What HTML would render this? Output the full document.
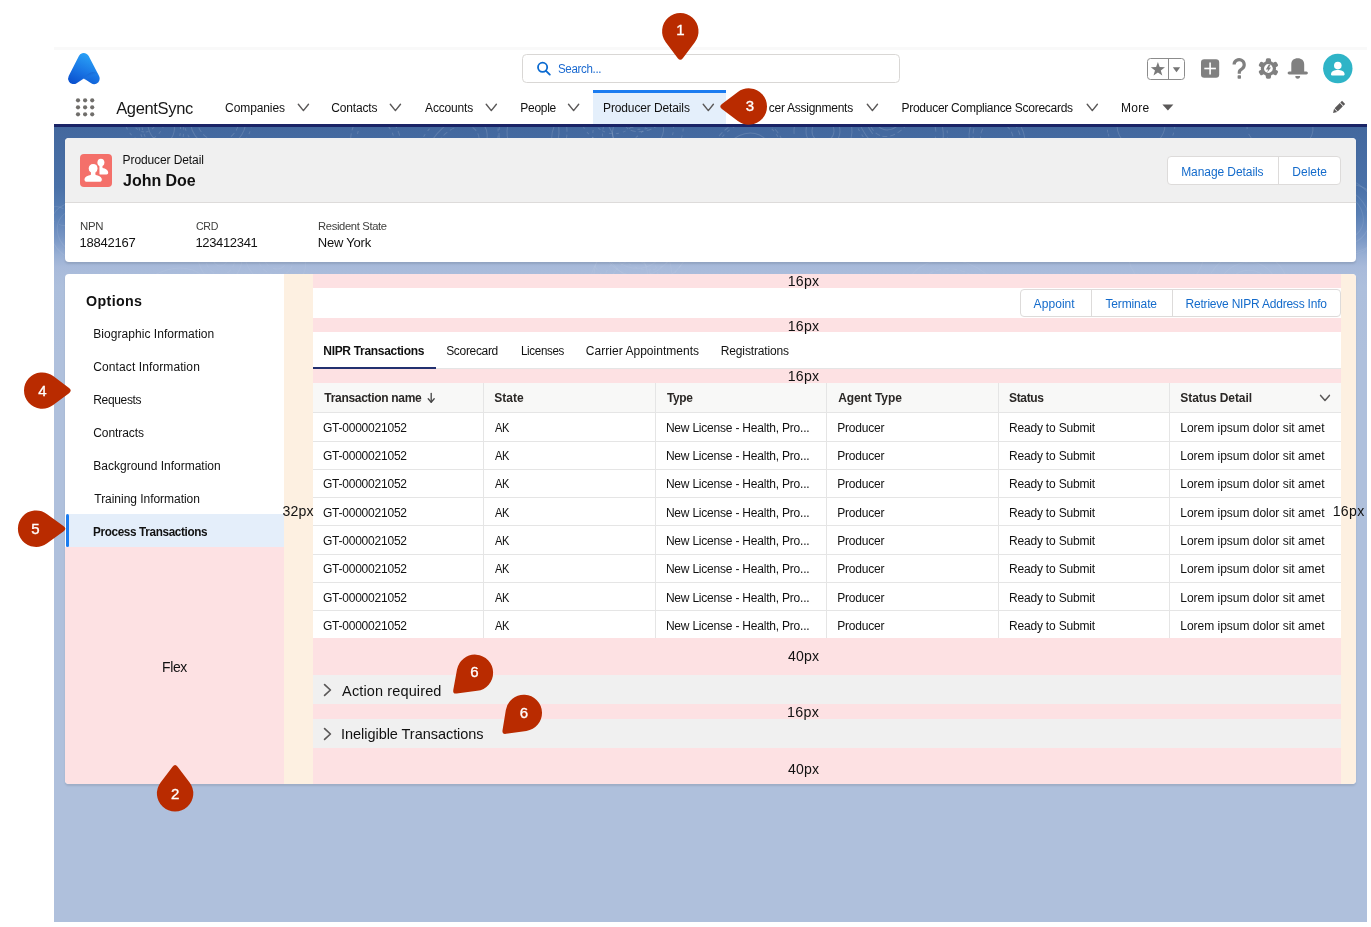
<!DOCTYPE html>
<html><head><meta charset="utf-8">
<style>
html,body{margin:0;padding:0;background:#fff;width:1371px;height:927px;overflow:hidden;position:relative;font-family:"Liberation Sans",sans-serif;}
.a{position:absolute;box-sizing:border-box;}
.t{position:absolute;white-space:pre;font-family:"Liberation Sans",sans-serif;transform-origin:0 0;}
#bg{left:54px;top:127px;width:1313px;height:795px;background:linear-gradient(180deg,#43689e 0px,#4a71a8 60px,#5a80b5 88px,#7795c4 110px,#98afd4 128px,#a8bada 140px,#adbfdc 160px,#afc0dc 230px,#afc0dc 795px);}
.card{background:#fff;border-radius:4px;box-shadow:0 2px 2px rgba(0,0,0,0.10);}
.pink{background:#fde1e3;}
.beige{background:#fdf0e1;}
.gray{background:#f0f0f0;}
.vline{width:1px;background:#e5e5e5;}
.hline{height:1px;background:#e5e5e5;}
</style></head><body>
<!-- page -->
<div class="a" style="left:54px;top:47px;width:1313px;height:3px;background:#f9f9f9"></div>
<div class="a" style="left:54px;top:50px;width:1313px;height:74px;background:#fff"></div>
<div class="a" id="bg"></div>
<svg class="a" style="left:54px;top:127px" width="1313" height="200" viewBox="54 127 1313 200">
  <defs><linearGradient id="fade" x1="0" y1="0" x2="0" y2="1"><stop offset="0" stop-color="#fff" stop-opacity="1"/><stop offset="0.55" stop-color="#fff" stop-opacity="0.6"/><stop offset="1" stop-color="#fff" stop-opacity="0"/></linearGradient>
  <mask id="fm"><rect x="54" y="127" width="1313" height="200" fill="url(#fade)"/></mask></defs>
  <g fill="none" stroke="#fff" stroke-opacity="0.14" stroke-width="1" mask="url(#fm)">
<ellipse cx="646" cy="223" rx="38" ry="30" transform="rotate(84 646 223)" stroke-dasharray="3 4"/>
<ellipse cx="646" cy="223" rx="47" ry="37" transform="rotate(84 646 223)" stroke-dasharray="3 4"/>
<ellipse cx="646" cy="223" rx="59" ry="48" transform="rotate(84 646 223)"/>
<ellipse cx="638" cy="131" rx="26" ry="22" transform="rotate(160 638 131)"/>
<ellipse cx="638" cy="131" rx="36" ry="31" transform="rotate(160 638 131)" stroke-dasharray="3 4"/>
<ellipse cx="638" cy="131" rx="46" ry="39" transform="rotate(160 638 131)" stroke-dasharray="3 4"/>
<ellipse cx="60" cy="216" rx="12" ry="8" transform="rotate(34 60 216)" stroke-dasharray="12 5"/>
<ellipse cx="630" cy="285" rx="26" ry="20" transform="rotate(115 630 285)" stroke-dasharray="12 5"/>
<ellipse cx="630" cy="285" rx="34" ry="27" transform="rotate(115 630 285)" stroke-dasharray="3 4"/>
<ellipse cx="630" cy="285" rx="50" ry="40" transform="rotate(115 630 285)"/>
<ellipse cx="988" cy="169" rx="17" ry="11" transform="rotate(52 988 169)" stroke-dasharray="12 5"/>
<ellipse cx="558" cy="311" rx="35" ry="24" transform="rotate(0 558 311)"/>
<ellipse cx="603" cy="225" rx="16" ry="12" transform="rotate(121 603 225)"/>
<ellipse cx="603" cy="225" rx="27" ry="19" transform="rotate(121 603 225)"/>
<ellipse cx="220" cy="256" rx="10" ry="8" transform="rotate(84 220 256)"/>
<ellipse cx="220" cy="256" rx="19" ry="15" transform="rotate(84 220 256)" stroke-dasharray="5 3"/>
<ellipse cx="220" cy="256" rx="27" ry="22" transform="rotate(84 220 256)"/>
<ellipse cx="196" cy="193" rx="16" ry="16" transform="rotate(49 196 193)"/>
<ellipse cx="196" cy="193" rx="24" ry="23" transform="rotate(49 196 193)"/>
<ellipse cx="196" cy="193" rx="40" ry="40" transform="rotate(49 196 193)" stroke-dasharray="3 4"/>
<ellipse cx="900" cy="122" rx="40" ry="28" transform="rotate(38 900 122)" stroke-dasharray="12 5"/>
<ellipse cx="900" cy="122" rx="48" ry="34" transform="rotate(38 900 122)"/>
<ellipse cx="900" cy="122" rx="53" ry="37" transform="rotate(38 900 122)" stroke-dasharray="3 4"/>
<ellipse cx="893" cy="103" rx="21" ry="14" transform="rotate(112 893 103)" stroke-dasharray="3 4"/>
<ellipse cx="893" cy="103" rx="28" ry="18" transform="rotate(112 893 103)"/>
<ellipse cx="893" cy="103" rx="35" ry="23" transform="rotate(112 893 103)" stroke-dasharray="5 3"/>
<ellipse cx="456" cy="150" rx="28" ry="19" transform="rotate(131 456 150)" stroke-dasharray="5 3"/>
<ellipse cx="456" cy="150" rx="38" ry="25" transform="rotate(131 456 150)"/>
<ellipse cx="456" cy="150" rx="51" ry="34" transform="rotate(131 456 150)" stroke-dasharray="3 4"/>
<ellipse cx="145" cy="110" rx="13" ry="9" transform="rotate(92 145 110)" stroke-dasharray="12 5"/>
<ellipse cx="145" cy="110" rx="22" ry="15" transform="rotate(92 145 110)" stroke-dasharray="3 4"/>
<ellipse cx="145" cy="110" rx="31" ry="22" transform="rotate(92 145 110)" stroke-dasharray="3 4"/>
<ellipse cx="275" cy="258" rx="12" ry="10" transform="rotate(41 275 258)" stroke-dasharray="12 5"/>
<ellipse cx="275" cy="258" rx="19" ry="16" transform="rotate(41 275 258)" stroke-dasharray="5 3"/>
<ellipse cx="275" cy="258" rx="33" ry="27" transform="rotate(41 275 258)"/>
<ellipse cx="401" cy="198" rx="12" ry="9" transform="rotate(32 401 198)"/>
<ellipse cx="401" cy="198" rx="20" ry="15" transform="rotate(32 401 198)"/>
<ellipse cx="401" cy="198" rx="36" ry="27" transform="rotate(32 401 198)" stroke-dasharray="3 4"/>
<ellipse cx="823" cy="131" rx="11" ry="11" transform="rotate(3 823 131)"/>
<ellipse cx="823" cy="131" rx="17" ry="17" transform="rotate(3 823 131)"/>
<ellipse cx="823" cy="131" rx="29" ry="28" transform="rotate(3 823 131)" stroke-dasharray="12 5"/>
<ellipse cx="467" cy="320" rx="12" ry="11" transform="rotate(98 467 320)" stroke-dasharray="5 3"/>
<ellipse cx="467" cy="320" rx="23" ry="21" transform="rotate(98 467 320)" stroke-dasharray="12 5"/>
<ellipse cx="467" cy="320" rx="28" ry="25" transform="rotate(98 467 320)"/>
<ellipse cx="1247" cy="292" rx="23" ry="21" transform="rotate(142 1247 292)"/>
<ellipse cx="1247" cy="292" rx="31" ry="29" transform="rotate(142 1247 292)"/>
<ellipse cx="1247" cy="292" rx="42" ry="40" transform="rotate(142 1247 292)"/>
<ellipse cx="161" cy="125" rx="18" ry="13" transform="rotate(75 161 125)"/>
<ellipse cx="161" cy="125" rx="26" ry="19" transform="rotate(75 161 125)" stroke-dasharray="3 4"/>
<ellipse cx="161" cy="125" rx="31" ry="22" transform="rotate(75 161 125)" stroke-dasharray="3 4"/>
<ellipse cx="80" cy="232" rx="24" ry="21" transform="rotate(41 80 232)"/>
<ellipse cx="80" cy="232" rx="32" ry="28" transform="rotate(41 80 232)"/>
<ellipse cx="533" cy="132" rx="28" ry="26" transform="rotate(93 533 132)"/>
<ellipse cx="533" cy="132" rx="37" ry="34" transform="rotate(93 533 132)" stroke-dasharray="5 3"/>
<ellipse cx="478" cy="246" rx="16" ry="15" transform="rotate(78 478 246)"/>
<ellipse cx="334" cy="303" rx="16" ry="12" transform="rotate(24 334 303)" stroke-dasharray="12 5"/>
<ellipse cx="1141" cy="125" rx="24" ry="23" transform="rotate(167 1141 125)"/>
<ellipse cx="1141" cy="125" rx="34" ry="32" transform="rotate(167 1141 125)" stroke-dasharray="3 4"/>
<ellipse cx="646" cy="116" rx="11" ry="7" transform="rotate(157 646 116)" stroke-dasharray="12 5"/>
<ellipse cx="646" cy="116" rx="19" ry="12" transform="rotate(157 646 116)" stroke-dasharray="3 4"/>
<ellipse cx="646" cy="116" rx="23" ry="14" transform="rotate(157 646 116)" stroke-dasharray="5 3"/>
<ellipse cx="583" cy="142" rx="33" ry="30" transform="rotate(48 583 142)"/>
<ellipse cx="638" cy="239" rx="30" ry="29" transform="rotate(145 638 239)"/>
<ellipse cx="638" cy="239" rx="37" ry="37" transform="rotate(145 638 239)"/>
<ellipse cx="638" cy="239" rx="51" ry="50" transform="rotate(145 638 239)" stroke-dasharray="3 4"/>
<ellipse cx="997" cy="139" rx="18" ry="16" transform="rotate(62 997 139)" stroke-dasharray="5 3"/>
<ellipse cx="997" cy="139" rx="27" ry="23" transform="rotate(62 997 139)" stroke-dasharray="5 3"/>
<ellipse cx="997" cy="139" rx="31" ry="27" transform="rotate(62 997 139)"/>
<ellipse cx="214" cy="200" rx="29" ry="22" transform="rotate(164 214 200)" stroke-dasharray="3 4"/>
<ellipse cx="214" cy="200" rx="40" ry="30" transform="rotate(164 214 200)" stroke-dasharray="12 5"/>
<ellipse cx="214" cy="200" rx="46" ry="35" transform="rotate(164 214 200)" stroke-dasharray="5 3"/>
<ellipse cx="173" cy="291" rx="34" ry="22" transform="rotate(166 173 291)"/>
<ellipse cx="1350" cy="218" rx="34" ry="33" transform="rotate(58 1350 218)"/>
<ellipse cx="90" cy="175" rx="23" ry="22" transform="rotate(50 90 175)"/>
<ellipse cx="615" cy="108" rx="26" ry="25" transform="rotate(124 615 108)" stroke-dasharray="3 4"/>
<ellipse cx="615" cy="108" rx="37" ry="36" transform="rotate(124 615 108)" stroke-dasharray="3 4"/>
<ellipse cx="1166" cy="252" rx="38" ry="38" transform="rotate(89 1166 252)"/>
<ellipse cx="746" cy="164" rx="32" ry="26" transform="rotate(115 746 164)"/>
<ellipse cx="746" cy="164" rx="44" ry="35" transform="rotate(115 746 164)" stroke-dasharray="3 4"/>
<ellipse cx="746" cy="164" rx="46" ry="38" transform="rotate(115 746 164)" stroke-dasharray="5 3"/>
<ellipse cx="1338" cy="215" rx="27" ry="22" transform="rotate(36 1338 215)"/>
<ellipse cx="1338" cy="215" rx="33" ry="27" transform="rotate(36 1338 215)"/>
<ellipse cx="1338" cy="215" rx="45" ry="37" transform="rotate(36 1338 215)"/>
<ellipse cx="769" cy="318" rx="14" ry="9" transform="rotate(17 769 318)"/>
<ellipse cx="769" cy="318" rx="21" ry="14" transform="rotate(17 769 318)"/>
<ellipse cx="769" cy="318" rx="32" ry="21" transform="rotate(17 769 318)" stroke-dasharray="12 5"/>
<ellipse cx="621" cy="279" rx="37" ry="27" transform="rotate(86 621 279)"/>
<ellipse cx="1280" cy="128" rx="33" ry="23" transform="rotate(4 1280 128)" stroke-dasharray="12 5"/>
<ellipse cx="472" cy="178" rx="29" ry="26" transform="rotate(19 472 178)" stroke-dasharray="3 4"/>
<ellipse cx="376" cy="144" rx="26" ry="19" transform="rotate(79 376 144)" stroke-dasharray="3 4"/>
<ellipse cx="376" cy="144" rx="33" ry="25" transform="rotate(79 376 144)" stroke-dasharray="5 3"/>
<ellipse cx="1198" cy="217" rx="17" ry="14" transform="rotate(39 1198 217)" stroke-dasharray="5 3"/>
<ellipse cx="1198" cy="217" rx="28" ry="23" transform="rotate(39 1198 217)" stroke-dasharray="12 5"/>
<ellipse cx="1198" cy="217" rx="39" ry="32" transform="rotate(39 1198 217)" stroke-dasharray="12 5"/>
<ellipse cx="848" cy="296" rx="16" ry="11" transform="rotate(140 848 296)" stroke-dasharray="5 3"/>
<ellipse cx="218" cy="119" rx="22" ry="21" transform="rotate(78 218 119)" stroke-dasharray="5 3"/>
<ellipse cx="218" cy="119" rx="29" ry="28" transform="rotate(78 218 119)"/>
<ellipse cx="218" cy="119" rx="35" ry="34" transform="rotate(78 218 119)" stroke-dasharray="3 4"/>
<ellipse cx="954" cy="301" rx="39" ry="31" transform="rotate(21 954 301)" stroke-dasharray="5 3"/>
<ellipse cx="954" cy="301" rx="50" ry="40" transform="rotate(21 954 301)"/>
  </g>
</svg>
<div class="a" style="left:54px;top:124px;width:1313px;height:3px;background:#1a2466"></div>

<!-- active nav tab -->
<div class="a" style="left:593px;top:93px;width:133px;height:31px;background:#e4effb"></div>
<div class="a" style="left:593px;top:90px;width:133px;height:3px;background:#1b7cf0"></div>
<!-- logo -->
<svg class="a" style="left:0;top:0" width="1371" height="927" viewBox="0 0 1371 927">
  <defs>
    <linearGradient id="lg" gradientUnits="userSpaceOnUse" x1="90" y1="53" x2="76" y2="84">
      <stop offset="0" stop-color="#2ba6f8"/><stop offset="0.55" stop-color="#1a78e6"/><stop offset="1" stop-color="#0b52cf"/>
    </linearGradient>
    <linearGradient id="lg2" gradientUnits="userSpaceOnUse" x1="90" y1="70" x2="93" y2="78">
      <stop offset="0" stop-color="#0a47b8" stop-opacity="0.85"/><stop offset="1" stop-color="#2a8cf0" stop-opacity="0"/>
    </linearGradient>
  </defs>
  <polygon points="83.8,58.6 94.2,78.6 83.8,71.8 73.6,78.6" fill="url(#lg)" stroke="url(#lg)" stroke-width="11" stroke-linejoin="round"/>
  <path d="M82.5,78.3 C86,75.5 89.5,72.5 93,72 C95.5,71.8 97.5,73 98.5,74.5 L99.5,78 C97,76 94,75.5 91,77 C88.5,78.2 86.5,80 85.5,80.5 Z" fill="url(#lg2)"/>
  <!-- grid -->
  <g fill="#706e6b">
    <circle cx="78" cy="100.3" r="2.1"/><circle cx="85.1" cy="100.3" r="2.1"/><circle cx="92.2" cy="100.3" r="2.1"/>
    <circle cx="78" cy="107.3" r="2.1"/><circle cx="85.1" cy="107.3" r="2.1"/><circle cx="92.2" cy="107.3" r="2.1"/>
    <circle cx="78" cy="114.3" r="2.1"/><circle cx="85.1" cy="114.3" r="2.1"/><circle cx="92.2" cy="114.3" r="2.1"/>
  </g>
  <!-- search box -->
  <rect x="522.5" y="54.5" width="377" height="28" rx="4" fill="#fff" stroke="#d9d7d5" stroke-width="1"/>
  <circle cx="542.6" cy="67.3" r="4.6" fill="none" stroke="#0b6ad0" stroke-width="1.8"/>
  <line x1="546" y1="70.8" x2="549.8" y2="74.6" stroke="#0b6ad0" stroke-width="1.9" stroke-linecap="round"/>
  <!-- favorites -->
  <rect x="1147.5" y="58.5" width="37" height="21" rx="3" fill="#fff" stroke="#8c8c8c" stroke-width="1"/>
  <line x1="1168.5" y1="58.5" x2="1168.5" y2="79.5" stroke="#8c8c8c" stroke-width="1"/>
  <polygon points="1157.9,62 1159.7,67.1 1165,67.2 1160.8,70.5 1162.3,75.6 1157.9,72.6 1153.5,75.6 1155,70.5 1150.8,67.2 1156.1,67.1" fill="#7a7a7a"/>
  <polygon points="1172.8,67.2 1180.2,67.2 1176.5,72.2" fill="#747474"/>
  <!-- plus -->
  <rect x="1201" y="59.2" width="18.2" height="18.6" rx="3.2" fill="#808080"/>
  <line x1="1204.3" y1="68.5" x2="1215.9" y2="68.5" stroke="#fff" stroke-width="1.6"/>
  <line x1="1210.1" y1="62.6" x2="1210.1" y2="74.4" stroke="#fff" stroke-width="1.6"/>
  <!-- help -->
  <path d="M1234.1,64.6 A5.05,5.05 0 1 1 1242.3,68.6 C1240.2,69.8 1239.3,70.6 1239.3,72.2 L1239.3,73.8" fill="none" stroke="#808080" stroke-width="3.2" stroke-linecap="butt"/>
  <rect x="1237.6" y="75.2" width="3.4" height="3.6" rx="0.7" fill="#808080"/>
  <!-- gear -->
  <g transform="translate(1268.4,68.5)">
    <g fill="#808080">
      <rect x="-2.6" y="-10.2" width="5.2" height="20.4" rx="1.6"/>
      <rect x="-2.6" y="-10.2" width="5.2" height="20.4" rx="1.6" transform="rotate(60)"/>
      <rect x="-2.6" y="-10.2" width="5.2" height="20.4" rx="1.6" transform="rotate(120)"/>
      <circle r="7.6"/>
    </g>
    <circle r="4.4" fill="#fff"/>
    <polygon points="0.4,-3.9 2.3,-3.9 0.7,-0.9 2.7,-0.9 -1.3,4.1 -0.2,0.9 -2.5,0.9" fill="#808080"/>
  </g>
  <!-- bell -->
  <path d="M1291.3,71.6 L1291.3,64.5 C1291.3,60.4 1293.8,58.3 1297.7,58.3 C1301.6,58.3 1304.2,60.4 1304.2,64.5 L1304.2,71.6 L1306.4,71.6 Q1307.9,71.8 1307.9,73.1 Q1307.9,74.4 1306.4,74.4 L1289.1,74.4 Q1287.6,74.4 1287.6,73.1 Q1287.6,71.8 1289.1,71.6 Z" fill="#808080"/>
  <path d="M1295.3,76 L1300.1,76 Q1300.1,78.7 1297.7,78.7 Q1295.3,78.7 1295.3,76 Z" fill="#808080"/>
  <!-- avatar -->
  <circle cx="1337.8" cy="68.5" r="14.7" fill="#2fb4c7"/>
  <circle cx="1337.8" cy="65.6" r="3.8" fill="#fff"/>
  <path d="M1331,74.2 C1331,71.2 1334.5,69.9 1337.8,69.9 C1341.1,69.9 1344.6,71.2 1344.6,74.2 L1344.6,74.6 Q1344.6,75.4 1343.8,75.4 L1331.8,75.4 Q1331,75.4 1331,74.6 Z" fill="#fff"/>
  <!-- nav chevrons -->
  <g fill="none" stroke="#5a5858" stroke-width="1.4" stroke-linecap="round" stroke-linejoin="round">
    <polyline points="298.3,104.2 303.4,110.6 308.5,104.2"/>
    <polyline points="390.3,104.2 395.4,110.6 400.5,104.2"/>
    <polyline points="486.2,104.2 491.3,110.6 496.4,104.2"/>
    <polyline points="568.5,104.2 573.6,110.6 578.7,104.2"/>
    <polyline points="703.2,104.2 708.3,110.6 713.4,104.2"/>
    <polyline points="867.3,104.2 872.4,110.6 877.5,104.2"/>
    <polyline points="1087.2,104.2 1092.3,110.6 1097.4,104.2"/>
  </g>
  <polygon points="1162.4,104.4 1173.4,104.4 1167.9,110.6" fill="#5a5858"/>
  <!-- pencil -->
  <g transform="translate(1339,107) rotate(45)">
    <rect x="-2.2" y="-6.5" width="4.4" height="2.4" fill="#5a5858"/>
    <rect x="-2.2" y="-3.3" width="4.4" height="7.3" fill="#5a5858"/>
    <polygon points="-2.2,4.8 2.2,4.8 0,8.4" fill="#5a5858"/>
  </g>
</svg>


<!-- header card -->
<div class="a card" style="left:65px;top:138px;width:1291px;height:124px;overflow:hidden">
  <div class="a" style="left:0;top:0;width:1291px;height:65px;background:#f0f0f0;border-bottom:1px solid #dddbda"></div>
</div>
<div class="a" style="left:79.5px;top:154.2px;width:32.6px;height:32.8px;border-radius:4px;background:#f4706a"></div>
<svg class="a" style="left:79.5px;top:154.2px" width="33" height="33" viewBox="0 0 33 33">
  <g fill="#fff">
    <ellipse cx="20.9" cy="8.6" rx="3.5" ry="3.8"/>
    <path d="M19.4,11.5 L22.4,11.5 L22.6,14 C25.5,14.6 28.2,16 28.2,18.6 C28.2,20 27.6,20.5 26.6,20.5 L19.5,20.5 Z"/>
  </g>
  <g fill="#fff" stroke="#f4706a" stroke-width="1.1">
    <path d="M13.1,9.4 C16,9.4 18.1,11.6 18.1,14.4 C18.1,16.4 17.1,17.8 15.9,18.8 L16,20.4 C19.6,21.1 22.4,22.6 22.4,25.6 C22.4,27.3 21.6,28.4 20.2,28.4 L6.2,28.4 C4.7,28.4 3.9,27.4 3.9,25.6 C3.9,22.6 6.7,21.1 10.3,20.4 L10.4,18.8 C9.1,17.8 8.1,16.4 8.1,14.4 C8.1,11.6 10.2,9.4 13.1,9.4 Z"/>
  </g>
</svg>
<!-- header buttons -->
<div class="a" style="left:1167px;top:156px;width:174px;height:29px;background:#fff;border:1px solid #dddbda;border-radius:4px"></div>
<div class="a" style="left:1278px;top:156px;width:1px;height:29px;background:#dddbda"></div>

<!-- main card -->
<div class="a card" style="left:65px;top:274px;width:1291px;height:510px;overflow:hidden">
</div>
<!-- sidebar -->
<div class="a" style="left:66px;top:514px;width:218px;height:33px;background:#e4eefa"></div>
<div class="a" style="left:65.8px;top:514.2px;width:3.2px;height:33px;background:#1b7cf0;border-radius:1.5px"></div>
<div class="a pink" style="left:65px;top:547px;width:219px;height:237px;border-bottom-left-radius:4px"></div>
<div class="a beige" style="left:284px;top:274px;width:29px;height:510px"></div>
<div class="a beige" style="left:1341px;top:274px;width:15px;height:510px;border-top-right-radius:4px;border-bottom-right-radius:4px"></div>
<!-- content column -->
<div class="a pink" style="left:313px;top:274px;width:1028px;height:14px"></div>
<div class="a pink" style="left:313px;top:318px;width:1028px;height:14px"></div>
<div class="a hline" style="left:313px;top:368px;width:1028px"></div>
<div class="a" style="left:313px;top:367px;width:123px;height:2px;background:#22306f"></div>
<div class="a pink" style="left:313px;top:369px;width:1028px;height:14px"></div>
<div class="a" style="left:313px;top:383px;width:1028px;height:29px;background:#f8f8f7"></div>
<div class="a" style="left:1019.5px;top:288.5px;width:321.5px;height:28.5px;background:#fff;border:1px solid #dddbda;border-radius:4px"></div>
<div class="a" style="left:1091px;top:288.5px;width:1px;height:28.5px;background:#dddbda"></div>
<div class="a" style="left:1172px;top:288.5px;width:1px;height:28.5px;background:#dddbda"></div>
<div class="a" style="left:313px;top:412px;width:1028px;height:226px;background:#fff"></div>
<div class="a hline" style="left:313px;top:412px;width:1028px"></div>
<div class="a hline" style="left:313px;top:441px;width:1028px"></div>
<div class="a hline" style="left:313px;top:469px;width:1028px"></div>
<div class="a hline" style="left:313px;top:497px;width:1028px"></div>
<div class="a hline" style="left:313px;top:525px;width:1028px"></div>
<div class="a hline" style="left:313px;top:554px;width:1028px"></div>
<div class="a hline" style="left:313px;top:582px;width:1028px"></div>
<div class="a hline" style="left:313px;top:610px;width:1028px"></div>
<div class="a vline" style="left:483px;top:383px;height:255px"></div>
<div class="a vline" style="left:655px;top:383px;height:255px"></div>
<div class="a vline" style="left:826px;top:383px;height:255px"></div>
<div class="a vline" style="left:998px;top:383px;height:255px"></div>
<div class="a vline" style="left:1169px;top:383px;height:255px"></div>
<div class="a pink" style="left:313px;top:638px;width:1028px;height:37px"></div>
<div class="a gray" style="left:313px;top:675px;width:1028px;height:29px"></div>
<div class="a pink" style="left:313px;top:704px;width:1028px;height:15px"></div>
<div class="a gray" style="left:313px;top:719px;width:1028px;height:29px"></div>
<div class="a pink" style="left:313px;top:748px;width:1028px;height:36px"></div>
<svg class="a" style="left:0;top:0" width="1371" height="927" viewBox="0 0 1371 927">
  <g fill="none" stroke="#5a5858" stroke-width="1.5" stroke-linecap="round" stroke-linejoin="round">
    <polyline points="1320.6,395.4 1325,400.4 1329.4,395.4"/>
    </g><g fill="none" stroke="#5a5858" stroke-width="1.7" stroke-linecap="round" stroke-linejoin="round"><polyline points="324.6,684.6 330.4,690 324.6,695.4"/>
    <polyline points="324.6,728.6 330.4,734 324.6,739.4"/>
  </g>
  <g fill="none" stroke="#444" stroke-width="1.3" stroke-linecap="round" stroke-linejoin="round">
    <line x1="431.2" y1="393.5" x2="431.2" y2="402"/>
    <polyline points="428.2,398.8 431.2,402.2 434.2,398.8"/>
  </g>
</svg>
<span class=t style="left:116.2px;top:100.33px;font-size:16.5px;line-height:16.5px;font-weight:400;color:#181818;letter-spacing:-0.338px">AgentSync</span>
<span class=t style="left:225.1px;top:101.84px;font-size:12px;line-height:12px;font-weight:400;color:#111111;letter-spacing:-0.100px">Companies</span>
<span class=t style="left:331.2px;top:101.84px;font-size:12px;line-height:12px;font-weight:400;color:#111111;letter-spacing:-0.157px">Contacts</span>
<span class=t style="left:425.1px;top:101.84px;font-size:12px;line-height:12px;font-weight:400;color:#111111;letter-spacing:-0.186px">Accounts</span>
<span class=t style="left:520.3px;top:101.84px;font-size:12px;line-height:12px;font-weight:400;color:#111111;letter-spacing:-0.280px">People</span>
<span class=t style="left:603.0px;top:101.84px;font-size:12px;line-height:12px;font-weight:400;color:#111111;letter-spacing:-0.120px">Producer Details</span>
<span class=t style="left:768.8px;top:101.84px;font-size:12px;line-height:12px;font-weight:400;color:#111111;letter-spacing:-0.264px">cer Assignments</span>
<span class=t style="left:901.5px;top:101.84px;font-size:12px;line-height:12px;font-weight:400;color:#111111;letter-spacing:-0.269px">Producer Compliance Scorecards</span>
<span class=t style="left:1121.0px;top:101.84px;font-size:12px;line-height:12px;font-weight:400;color:#111111;letter-spacing:0.300px">More</span>
<span class=t style="left:557.6px;top:63.24px;font-size:12px;line-height:12px;font-weight:400;color:#1b6ad0;letter-spacing:-0.350px;transform:scaleX(0.9630)">Search...</span>
<span class=t style="left:122.6px;top:154.24px;font-size:12px;line-height:12px;font-weight:400;color:#111111;letter-spacing:-0.100px">Producer Detail</span>
<span class=t style="left:123.1px;top:172.56px;font-size:16px;line-height:16px;font-weight:700;color:#111111;letter-spacing:-0.043px">John Doe</span>
<span class=t style="left:79.6px;top:220.57px;font-size:11.5px;line-height:11.5px;font-weight:400;color:#3e3e3c;letter-spacing:-0.350px;transform:scaleX(0.9910)">NPN</span>
<span class=t style="left:195.5px;top:220.57px;font-size:11.5px;line-height:11.5px;font-weight:400;color:#3e3e3c;letter-spacing:-0.350px;transform:scaleX(0.9238)">CRD</span>
<span class=t style="left:317.7px;top:220.57px;font-size:11.5px;line-height:11.5px;font-weight:400;color:#3e3e3c;letter-spacing:-0.350px;transform:scaleX(0.9748)">Resident State</span>
<span class=t style="left:79.6px;top:236.20px;font-size:13px;line-height:13px;font-weight:400;color:#111111;letter-spacing:-0.243px">18842167</span>
<span class=t style="left:195.4px;top:236.20px;font-size:13px;line-height:13px;font-weight:400;color:#111111;letter-spacing:-0.338px">123412341</span>
<span class=t style="left:317.7px;top:236.20px;font-size:13px;line-height:13px;font-weight:400;color:#111111;letter-spacing:-0.200px">New York</span>
<span class=t style="left:1181.2px;top:165.74px;font-size:12px;line-height:12px;font-weight:400;color:#146bcb;letter-spacing:-0.077px">Manage Details</span>
<span class=t style="left:1292.3px;top:165.74px;font-size:12px;line-height:12px;font-weight:400;color:#146bcb;letter-spacing:0.000px">Delete</span>
<span class=t style="left:85.6px;top:293.95px;font-size:14px;line-height:14px;font-weight:700;color:#111111;letter-spacing:0.350px;transform:scaleX(1.0188)">Options</span>
<span class=t style="left:93.3px;top:328.44px;font-size:12px;line-height:12px;font-weight:400;color:#111111;letter-spacing:0.043px">Biographic Information</span>
<span class=t style="left:93.3px;top:361.29px;font-size:12px;line-height:12px;font-weight:400;color:#111111;letter-spacing:0.100px">Contact Information</span>
<span class=t style="left:93.3px;top:394.14px;font-size:12px;line-height:12px;font-weight:400;color:#111111;letter-spacing:-0.343px">Requests</span>
<span class=t style="left:93.3px;top:426.99px;font-size:12px;line-height:12px;font-weight:400;color:#111111;letter-spacing:-0.088px">Contracts</span>
<span class=t style="left:93.3px;top:459.84px;font-size:12px;line-height:12px;font-weight:400;color:#111111;letter-spacing:0.000px">Background Information</span>
<span class=t style="left:94.3px;top:492.69px;font-size:12px;line-height:12px;font-weight:400;color:#111111;letter-spacing:-0.037px">Training Information</span>
<span class=t style="left:93.3px;top:525.54px;font-size:12px;line-height:12px;font-weight:700;color:#111111;letter-spacing:-0.350px;transform:scaleX(0.9764)">Process Transactions</span>
<span class=t style="left:787.8px;top:273.86px;font-size:14.1px;line-height:14.1px;font-weight:400;color:#111;letter-spacing:0.233px">16px</span>
<span class=t style="left:787.8px;top:318.86px;font-size:14.1px;line-height:14.1px;font-weight:400;color:#111;letter-spacing:0.233px">16px</span>
<span class=t style="left:787.8px;top:368.66px;font-size:14.1px;line-height:14.1px;font-weight:400;color:#111;letter-spacing:0.233px">16px</span>
<span class=t style="left:282.5px;top:503.66px;font-size:14.1px;line-height:14.1px;font-weight:400;color:#111;letter-spacing:0.200px">32px</span>
<span class=t style="left:1332.7px;top:503.66px;font-size:14.1px;line-height:14.1px;font-weight:400;color:#111;letter-spacing:0.333px">16px</span>
<span class=t style="left:788.0px;top:648.76px;font-size:14.1px;line-height:14.1px;font-weight:400;color:#111;letter-spacing:0.133px">40px</span>
<span class=t style="left:787.0px;top:704.96px;font-size:14.1px;line-height:14.1px;font-weight:400;color:#111;letter-spacing:0.350px;transform:scaleX(1.0116)">16px</span>
<span class=t style="left:788.0px;top:761.66px;font-size:14.1px;line-height:14.1px;font-weight:400;color:#111;letter-spacing:0.133px">40px</span>
<span class=t style="left:161.5px;top:660.06px;font-size:14.1px;line-height:14.1px;font-weight:400;color:#111;letter-spacing:-0.350px;transform:scaleX(0.9896)">Flex</span>
<span class=t style="left:1033.6px;top:297.64px;font-size:12px;line-height:12px;font-weight:400;color:#146bcb;letter-spacing:0.067px">Appoint</span>
<span class=t style="left:1105.5px;top:297.64px;font-size:12px;line-height:12px;font-weight:400;color:#146bcb;letter-spacing:-0.150px">Terminate</span>
<span class=t style="left:1185.6px;top:297.64px;font-size:12px;line-height:12px;font-weight:400;color:#146bcb;letter-spacing:-0.216px">Retrieve NIPR Address Info</span>
<span class=t style="left:323.3px;top:344.64px;font-size:12px;line-height:12px;font-weight:700;color:#111111;letter-spacing:-0.312px">NIPR Transactions</span>
<span class=t style="left:446.2px;top:344.64px;font-size:12px;line-height:12px;font-weight:400;color:#111111;letter-spacing:-0.325px">Scorecard</span>
<span class=t style="left:520.5px;top:344.64px;font-size:12px;line-height:12px;font-weight:400;color:#111111;letter-spacing:-0.350px;transform:scaleX(0.9644)">Licenses</span>
<span class=t style="left:585.8px;top:344.64px;font-size:12px;line-height:12px;font-weight:400;color:#111111;letter-spacing:0.032px">Carrier Appointments</span>
<span class=t style="left:720.8px;top:344.64px;font-size:12px;line-height:12px;font-weight:400;color:#111111;letter-spacing:-0.150px">Registrations</span>
<span class=t style="left:324.3px;top:392.04px;font-size:12px;line-height:12px;font-weight:700;color:#2b2826;letter-spacing:-0.307px">Transaction name</span>
<span class=t style="left:494.3px;top:392.04px;font-size:12px;line-height:12px;font-weight:700;color:#2b2826;letter-spacing:0.000px">State</span>
<span class=t style="left:666.9px;top:392.04px;font-size:12px;line-height:12px;font-weight:700;color:#2b2826;letter-spacing:-0.350px;transform:scaleX(0.9942)">Type</span>
<span class=t style="left:838.2px;top:392.04px;font-size:12px;line-height:12px;font-weight:700;color:#2b2826;letter-spacing:-0.089px">Agent Type</span>
<span class=t style="left:1009.0px;top:392.04px;font-size:12px;line-height:12px;font-weight:700;color:#2b2826;letter-spacing:-0.340px">Status</span>
<span class=t style="left:1180.3px;top:392.04px;font-size:12px;line-height:12px;font-weight:700;color:#2b2826;letter-spacing:-0.083px">Status Detail</span>
<span class=t style="left:322.9px;top:421.54px;font-size:12px;line-height:12px;font-weight:400;color:#111111;letter-spacing:-0.217px">GT-0000021052</span>
<span class=t style="left:495.4px;top:421.54px;font-size:12px;line-height:12px;font-weight:400;color:#111111;letter-spacing:-0.350px;transform:scaleX(0.9201)">AK</span>
<span class=t style="left:665.9px;top:421.54px;font-size:12px;line-height:12px;font-weight:400;color:#111111;letter-spacing:-0.211px">New License - Health, Pro...</span>
<span class=t style="left:837.2px;top:421.54px;font-size:12px;line-height:12px;font-weight:400;color:#111111;letter-spacing:-0.214px">Producer</span>
<span class=t style="left:1009.0px;top:421.54px;font-size:12px;line-height:12px;font-weight:400;color:#111111;letter-spacing:-0.193px">Ready to Submit</span>
<span class=t style="left:1180.3px;top:421.54px;font-size:12px;line-height:12px;font-weight:400;color:#111111;letter-spacing:-0.020px">Lorem ipsum dolor sit amet</span>
<span class=t style="left:322.9px;top:449.87px;font-size:12px;line-height:12px;font-weight:400;color:#111111;letter-spacing:-0.217px">GT-0000021052</span>
<span class=t style="left:495.4px;top:449.87px;font-size:12px;line-height:12px;font-weight:400;color:#111111;letter-spacing:-0.350px;transform:scaleX(0.9201)">AK</span>
<span class=t style="left:665.9px;top:449.87px;font-size:12px;line-height:12px;font-weight:400;color:#111111;letter-spacing:-0.211px">New License - Health, Pro...</span>
<span class=t style="left:837.2px;top:449.87px;font-size:12px;line-height:12px;font-weight:400;color:#111111;letter-spacing:-0.214px">Producer</span>
<span class=t style="left:1009.0px;top:449.87px;font-size:12px;line-height:12px;font-weight:400;color:#111111;letter-spacing:-0.193px">Ready to Submit</span>
<span class=t style="left:1180.3px;top:449.87px;font-size:12px;line-height:12px;font-weight:400;color:#111111;letter-spacing:-0.020px">Lorem ipsum dolor sit amet</span>
<span class=t style="left:322.9px;top:478.20px;font-size:12px;line-height:12px;font-weight:400;color:#111111;letter-spacing:-0.217px">GT-0000021052</span>
<span class=t style="left:495.4px;top:478.20px;font-size:12px;line-height:12px;font-weight:400;color:#111111;letter-spacing:-0.350px;transform:scaleX(0.9201)">AK</span>
<span class=t style="left:665.9px;top:478.20px;font-size:12px;line-height:12px;font-weight:400;color:#111111;letter-spacing:-0.211px">New License - Health, Pro...</span>
<span class=t style="left:837.2px;top:478.20px;font-size:12px;line-height:12px;font-weight:400;color:#111111;letter-spacing:-0.214px">Producer</span>
<span class=t style="left:1009.0px;top:478.20px;font-size:12px;line-height:12px;font-weight:400;color:#111111;letter-spacing:-0.193px">Ready to Submit</span>
<span class=t style="left:1180.3px;top:478.20px;font-size:12px;line-height:12px;font-weight:400;color:#111111;letter-spacing:-0.020px">Lorem ipsum dolor sit amet</span>
<span class=t style="left:322.9px;top:506.53px;font-size:12px;line-height:12px;font-weight:400;color:#111111;letter-spacing:-0.217px">GT-0000021052</span>
<span class=t style="left:495.4px;top:506.53px;font-size:12px;line-height:12px;font-weight:400;color:#111111;letter-spacing:-0.350px;transform:scaleX(0.9201)">AK</span>
<span class=t style="left:665.9px;top:506.53px;font-size:12px;line-height:12px;font-weight:400;color:#111111;letter-spacing:-0.211px">New License - Health, Pro...</span>
<span class=t style="left:837.2px;top:506.53px;font-size:12px;line-height:12px;font-weight:400;color:#111111;letter-spacing:-0.214px">Producer</span>
<span class=t style="left:1009.0px;top:506.53px;font-size:12px;line-height:12px;font-weight:400;color:#111111;letter-spacing:-0.193px">Ready to Submit</span>
<span class=t style="left:1180.3px;top:506.53px;font-size:12px;line-height:12px;font-weight:400;color:#111111;letter-spacing:-0.020px">Lorem ipsum dolor sit amet</span>
<span class=t style="left:322.9px;top:534.86px;font-size:12px;line-height:12px;font-weight:400;color:#111111;letter-spacing:-0.217px">GT-0000021052</span>
<span class=t style="left:495.4px;top:534.86px;font-size:12px;line-height:12px;font-weight:400;color:#111111;letter-spacing:-0.350px;transform:scaleX(0.9201)">AK</span>
<span class=t style="left:665.9px;top:534.86px;font-size:12px;line-height:12px;font-weight:400;color:#111111;letter-spacing:-0.211px">New License - Health, Pro...</span>
<span class=t style="left:837.2px;top:534.86px;font-size:12px;line-height:12px;font-weight:400;color:#111111;letter-spacing:-0.214px">Producer</span>
<span class=t style="left:1009.0px;top:534.86px;font-size:12px;line-height:12px;font-weight:400;color:#111111;letter-spacing:-0.193px">Ready to Submit</span>
<span class=t style="left:1180.3px;top:534.86px;font-size:12px;line-height:12px;font-weight:400;color:#111111;letter-spacing:-0.020px">Lorem ipsum dolor sit amet</span>
<span class=t style="left:322.9px;top:563.19px;font-size:12px;line-height:12px;font-weight:400;color:#111111;letter-spacing:-0.217px">GT-0000021052</span>
<span class=t style="left:495.4px;top:563.19px;font-size:12px;line-height:12px;font-weight:400;color:#111111;letter-spacing:-0.350px;transform:scaleX(0.9201)">AK</span>
<span class=t style="left:665.9px;top:563.19px;font-size:12px;line-height:12px;font-weight:400;color:#111111;letter-spacing:-0.211px">New License - Health, Pro...</span>
<span class=t style="left:837.2px;top:563.19px;font-size:12px;line-height:12px;font-weight:400;color:#111111;letter-spacing:-0.214px">Producer</span>
<span class=t style="left:1009.0px;top:563.19px;font-size:12px;line-height:12px;font-weight:400;color:#111111;letter-spacing:-0.193px">Ready to Submit</span>
<span class=t style="left:1180.3px;top:563.19px;font-size:12px;line-height:12px;font-weight:400;color:#111111;letter-spacing:-0.020px">Lorem ipsum dolor sit amet</span>
<span class=t style="left:322.9px;top:591.52px;font-size:12px;line-height:12px;font-weight:400;color:#111111;letter-spacing:-0.217px">GT-0000021052</span>
<span class=t style="left:495.4px;top:591.52px;font-size:12px;line-height:12px;font-weight:400;color:#111111;letter-spacing:-0.350px;transform:scaleX(0.9201)">AK</span>
<span class=t style="left:665.9px;top:591.52px;font-size:12px;line-height:12px;font-weight:400;color:#111111;letter-spacing:-0.211px">New License - Health, Pro...</span>
<span class=t style="left:837.2px;top:591.52px;font-size:12px;line-height:12px;font-weight:400;color:#111111;letter-spacing:-0.214px">Producer</span>
<span class=t style="left:1009.0px;top:591.52px;font-size:12px;line-height:12px;font-weight:400;color:#111111;letter-spacing:-0.193px">Ready to Submit</span>
<span class=t style="left:1180.3px;top:591.52px;font-size:12px;line-height:12px;font-weight:400;color:#111111;letter-spacing:-0.020px">Lorem ipsum dolor sit amet</span>
<span class=t style="left:322.9px;top:619.85px;font-size:12px;line-height:12px;font-weight:400;color:#111111;letter-spacing:-0.217px">GT-0000021052</span>
<span class=t style="left:495.4px;top:619.85px;font-size:12px;line-height:12px;font-weight:400;color:#111111;letter-spacing:-0.350px;transform:scaleX(0.9201)">AK</span>
<span class=t style="left:665.9px;top:619.85px;font-size:12px;line-height:12px;font-weight:400;color:#111111;letter-spacing:-0.211px">New License - Health, Pro...</span>
<span class=t style="left:837.2px;top:619.85px;font-size:12px;line-height:12px;font-weight:400;color:#111111;letter-spacing:-0.214px">Producer</span>
<span class=t style="left:1009.0px;top:619.85px;font-size:12px;line-height:12px;font-weight:400;color:#111111;letter-spacing:-0.193px">Ready to Submit</span>
<span class=t style="left:1180.3px;top:619.85px;font-size:12px;line-height:12px;font-weight:400;color:#111111;letter-spacing:-0.020px">Lorem ipsum dolor sit amet</span>
<span class=t style="left:342.1px;top:683.63px;font-size:14.5px;line-height:14.5px;font-weight:400;color:#111111;letter-spacing:0.129px">Action required</span>
<span class=t style="left:341.1px;top:727.23px;font-size:14.5px;line-height:14.5px;font-weight:400;color:#111111;letter-spacing:-0.045px">Ineligible Transactions</span>
<svg class="a" style="left:0;top:0" width="1371" height="927" viewBox="0 0 1371 927">
<path d="M694.85,42.13 L682.82,58.14 Q680.30,61.50 677.78,58.14 L665.75,42.13 A18.2,18.2 0 1 1 694.85,42.13 Z" fill="#b92b00"/><text x="680.3" y="34.9" text-anchor="middle" font-family="Liberation Sans" font-weight="400" font-size="15" fill="#fff" stroke="#fff" stroke-width="0.35">1</text>
<path d="M160.60,782.40 L172.56,766.65 Q175.10,763.30 177.64,766.65 L189.60,782.40 A18.2,18.2 0 1 1 160.60,782.40 Z" fill="#b92b00"/><text x="175.1" y="798.8" text-anchor="middle" font-family="Liberation Sans" font-weight="400" font-size="15" fill="#fff" stroke="#fff" stroke-width="0.35">2</text>
<path d="M737.83,121.02 L721.95,109.03 Q718.60,106.50 721.95,103.97 L737.83,91.98 A18.2,18.2 0 1 1 737.83,121.02 Z" fill="#b92b00"/><text x="749.8" y="111.2" text-anchor="middle" font-family="Liberation Sans" font-weight="400" font-size="15" fill="#fff" stroke="#fff" stroke-width="0.35">3</text>
<path d="M53.17,376.08 L69.05,388.07 Q72.40,390.60 69.05,393.13 L53.17,405.12 A18.2,18.2 0 1 1 53.17,376.08 Z" fill="#b92b00"/><text x="42.4" y="396.3" text-anchor="middle" font-family="Liberation Sans" font-weight="400" font-size="15" fill="#fff" stroke="#fff" stroke-width="0.35">4</text>
<path d="M46.79,513.97 L63.70,526.23 Q67.10,528.70 63.70,531.17 L46.79,543.43 A18.2,18.2 0 1 1 46.79,513.97 Z" fill="#b92b00"/><text x="35.4" y="534.4" text-anchor="middle" font-family="Liberation Sans" font-weight="400" font-size="15" fill="#fff" stroke="#fff" stroke-width="0.35">5</text>
<path d="M477.22,690.85 L456.70,693.49 Q452.53,694.03 453.28,689.89 L457.00,669.54 A18.2,18.2 0 1 1 477.22,690.85 Z" fill="#b92b00"/><text x="474.5" y="677.4" text-anchor="middle" font-family="Liberation Sans" font-weight="400" font-size="15" fill="#fff" stroke="#fff" stroke-width="0.35">6</text>
<path d="M526.39,730.92 L506.00,733.84 Q501.84,734.44 502.52,730.30 L505.84,709.97 A18.2,18.2 0 1 1 526.39,730.92 Z" fill="#b92b00"/><text x="523.8" y="718.3" text-anchor="middle" font-family="Liberation Sans" font-weight="400" font-size="15" fill="#fff" stroke="#fff" stroke-width="0.35">6</text>
</svg>
</body></html>
